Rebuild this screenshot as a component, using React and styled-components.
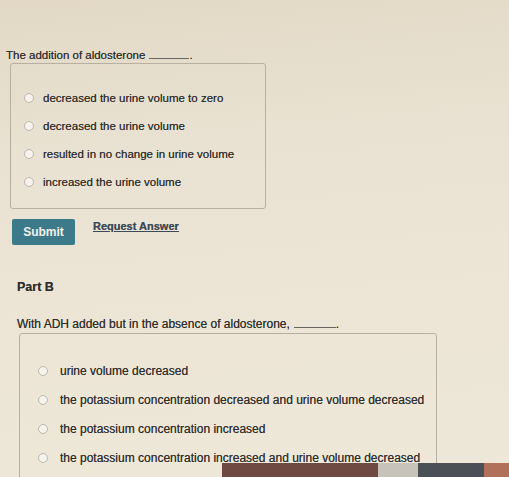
import React from 'react';
import styled, { createGlobalStyle } from 'styled-components';

//------------------------------------------------------------------------------
// STYLE:
//------------------------------------------------------------------------------
const GlobalStyle = createGlobalStyle`
  *, *::before, *::after {
    box-sizing: border-box;
  }
  html, body {
    margin: 0;
    padding: 0;
    background: #e8e1d1;
  }
  body {
    font-family: "Liberation Sans", Arial, sans-serif;
    color: #2f2e2d;
    text-shadow: 0 0 0.6px rgba(40, 38, 36, 0.7);
  }
`;

const Page = styled.div`
  position: relative;
  height: 477px;
  overflow: hidden;
  background: linear-gradient(175deg, #e2d8c5 0%, #e9e2d2 30%, #ede6d6 70%, #eee8d9 100%);
`;

const Part = styled.section`
  display: flex;
  flex-direction: column;
  padding: ${(p) => p.$pad};
`;

const Prompt = styled.p`
  margin: 0;
  font-size: ${(p) => p.$size || '11.5px'};
  line-height: 14px;
`;

const Blank = styled.span`
  display: inline-block;
  width: ${(p) => p.$w || 38}px;
  margin-left: 4px;
  border-bottom: 1px solid #6a6763;
`;

const ChoiceBox = styled.div`
  width: ${(p) => p.$w}px;
  margin-top: ${(p) => p.$top}px;
  margin-left: ${(p) => p.$left || 0}px;
  padding: ${(p) => p.$pad};
  border: 1px solid #b7b0a2;
  border-radius: 3px;
  display: flex;
  flex-direction: column;
`;

const Choice = styled.label`
  display: flex;
  align-items: center;
  height: ${(p) => p.$h}px;
  gap: ${(p) => p.$gap}px;
  font-size: ${(p) => p.$size};
`;

const Radio = styled.span`
  width: 10px;
  height: 10px;
  border-radius: 50%;
  border: 1px solid #bcb8af;
  background: #f6f3ec;
  flex: none;
`;

const Actions = styled.div`
  display: flex;
  align-items: flex-start;
  gap: 18px;
  margin-top: 10px;
  margin-left: 6px;
`;

const SubmitBtn = styled.button`
  width: 63px;
  height: 26px;
  border: none;
  border-radius: 2px;
  background: #3c7a89;
  color: #f4f1ea;
  font-family: inherit;
  font-size: 12px;
  font-weight: bold;
  text-shadow: none;
  padding: 0;
`;

const LinkBtn = styled.a`
  margin-top: 1px;
  font-size: 11px;
  font-weight: bold;
  color: #3b4a5a;
  text-decoration: underline;
`;

const PartTitle = styled.h3`
  margin: 0;
  font-size: 12.5px;
  font-weight: bold;
  line-height: 15px;
`;

// laptop bezel edge along the bottom of the photo
const Bezel = styled.div`
  position: absolute;
  left: 0;
  right: 0;
  bottom: 0;
  height: 14px;
  display: flex;
`;

const BezelPart = styled.div`
  flex: ${(p) => (p.$w ? `0 0 ${p.$w}px` : 1)};
  background: ${(p) => p.$bg};
`;

//------------------------------------------------------------------------------
// COMPONENT:
//------------------------------------------------------------------------------
const partA = [
  'decreased the urine volume to zero',
  'decreased the urine volume',
  'resulted in no change in urine volume',
  'increased the urine volume',
];

const partB = [
  'urine volume decreased',
  'the potassium concentration decreased and urine volume decreased',
  'the potassium concentration increased',
  'the potassium concentration increased and urine volume decreased',
];

const App = () => (
  <Page>
    <GlobalStyle />
    <Part $pad="48px 0 0 6px">
      <Prompt>
        The addition of aldosterone<Blank $w={40} />.
      </Prompt>
      <ChoiceBox $w={256} $top={1} $left={4} $pad="20px 0 12px 13px">
        {partA.map((text) => (
          <Choice key={text} $h={28} $gap={9} $size="11.5px">
            <Radio />
            {text}
          </Choice>
        ))}
      </ChoiceBox>
      <Actions>
        <SubmitBtn>Submit</SubmitBtn>
        <LinkBtn>Request Answer</LinkBtn>
      </Actions>
    </Part>

    <Part $pad="35px 0 0 17px">
      <PartTitle>Part B</PartTitle>
      <Prompt $size="12px" style={{ marginTop: 22 }}>
        With ADH added but in the absence of aldosterone,<Blank $w={42} />.
      </Prompt>
      <ChoiceBox $w={418} $top={2} $left={2} $pad="22px 0 20px 18px">
        {partB.map((text) => (
          <Choice key={text} $h={29} $gap={12} $size="12px">
            <Radio />
            {text}
          </Choice>
        ))}
      </ChoiceBox>
    </Part>

    <Bezel>
      <BezelPart $w={222} $bg="transparent" />
      <BezelPart $w={156} $bg="#6e4a42" />
      <BezelPart $w={40} $bg="#c8c3ba" />
      <BezelPart $w={66} $bg="#4b5057" />
      <BezelPart $bg="#b0705a" />
    </Bezel>
  </Page>
);

export default App;
